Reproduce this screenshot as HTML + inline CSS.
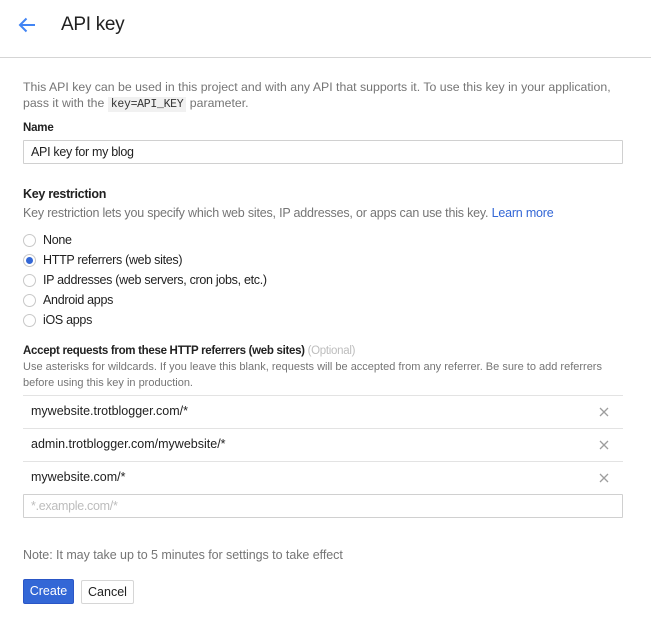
<!DOCTYPE html>
<html><head><meta charset="utf-8">
<style>
*{margin:0;padding:0;box-sizing:border-box}
body{width:651px;height:619px;background:#fff;font-family:"Liberation Sans",sans-serif;position:relative;overflow:hidden;color:#212121}
.a{position:absolute;white-space:nowrap}
.t12{font-size:12.3px;color:#757575}
.t11{font-size:11px;color:#757575}
.lbl{font-size:12px;letter-spacing:-0.2px;color:#212121}
.inp{position:absolute;left:23px;width:600px;height:24px;border:1px solid #d0d0d0;border-radius:1px}
.radio{position:absolute;left:23px;width:13px;height:13px;border:1px solid #c8c8c8;border-radius:50%}
.rl{position:absolute;left:43px;font-size:12.5px;letter-spacing:-0.3px;color:#212121;white-space:nowrap}
.hr{position:absolute;left:23px;width:600px;height:1px;background:#e3e3e3}
.row{position:absolute;left:31px;font-size:12.5px;color:#212121;white-space:nowrap}
.x{position:absolute;left:599px;width:10px;height:10px}
</style></head><body>
<svg class="a" style="left:17px;top:16px" width="19" height="18" viewBox="0 0 19 18"><path d="M18 9H3M9.5 2.5L3 9l6.5 6.5" fill="none" stroke="#4285f4" stroke-width="2"/></svg>
<div class="a" style="left:61px;top:14px;font-size:19px;letter-spacing:-0.3px;color:#212121">API key</div>
<div class="a" style="left:0;top:57px;width:651px;height:1px;background:#d5d5d5"></div>

<div class="a t12" style="left:23px;top:80px">This API key can be used in this project and with any API that supports it. To use this key in your application,</div>
<div class="a t12" style="left:23px;top:96px">pass it with the <span style="font-family:'Liberation Mono',monospace;font-size:11.5px;background:#f1f1f1;padding:1px 3px;color:#333;letter-spacing:-0.3px">key=API_KEY</span> parameter.</div>

<div class="a lbl" style="left:23px;top:122px;font-weight:bold;font-size:11.5px">Name</div>
<div class="inp" style="top:140px"></div>
<div class="a" style="left:31px;top:145px;font-size:12.5px;letter-spacing:-0.3px">API key for my blog</div>

<div class="a" style="left:23px;top:187px;font-size:12.5px;font-weight:bold;letter-spacing:-0.3px;color:#212121">Key restriction</div>
<div class="a" style="left:23px;top:206px;font-size:12.5px;letter-spacing:-0.2px;color:#757575">Key restriction lets you specify which web sites, IP addresses, or apps can use this key. <span style="color:#3367d6">Learn more</span></div>

<div class="radio" style="top:234px"></div><div class="rl" style="top:233px">None</div>
<div class="radio" style="top:254px"><div style="position:absolute;left:2px;top:2px;width:7px;height:7px;border-radius:50%;background:#3367d6"></div></div><div class="rl" style="top:253px">HTTP referrers (web sites)</div>
<div class="radio" style="top:274px"></div><div class="rl" style="top:273px">IP addresses (web servers, cron jobs, etc.)</div>
<div class="radio" style="top:294px"></div><div class="rl" style="top:293px">Android apps</div>
<div class="radio" style="top:314px"></div><div class="rl" style="top:313px">iOS apps</div>

<div class="a" style="left:23px;top:345px;font-size:11.5px;font-weight:bold;letter-spacing:-0.3px;color:#212121">Accept requests from these HTTP referrers (web sites) <span style="font-weight:normal;color:#bdbdbd">(Optional)</span></div>
<div class="a t11" style="left:23px;top:361px">Use asterisks for wildcards. If you leave this blank, requests will be accepted from any referrer. Be sure to add referrers</div>
<div class="a t11" style="left:23px;top:377px">before using this key in production.</div>

<div class="hr" style="top:395px"></div>
<div class="row" style="top:404px">mywebsite.trotblogger.com/*</div>
<svg class="x" style="top:407px" viewBox="0 0 10 10"><path d="M1 1l8 8M9 1L1 9" stroke="#9e9e9e" stroke-width="1.3"/></svg>
<div class="hr" style="top:428px"></div>
<div class="row" style="top:437px">admin.trotblogger.com/mywebsite/*</div>
<svg class="x" style="top:440px" viewBox="0 0 10 10"><path d="M1 1l8 8M9 1L1 9" stroke="#9e9e9e" stroke-width="1.3"/></svg>
<div class="hr" style="top:461px"></div>
<div class="row" style="top:470px">mywebsite.com/*</div>
<svg class="x" style="top:473px" viewBox="0 0 10 10"><path d="M1 1l8 8M9 1L1 9" stroke="#9e9e9e" stroke-width="1.3"/></svg>
<div class="inp" style="top:494px"></div>
<div class="a" style="left:31px;top:499px;font-size:12.5px;letter-spacing:-0.3px;color:#bdbdbd">*.example.com/*</div>

<div class="a" style="left:23px;top:548px;font-size:12.5px;letter-spacing:-0.05px;color:#757575">Note: It may take up to 5 minutes for settings to take effect</div>

<div class="a" style="left:23px;top:579px;width:51px;height:25px;background:#3367d6;border:1px solid #2a56c6;border-radius:2px;color:#fff;font-size:12.5px;text-align:center;line-height:23px">Create</div>
<div class="a" style="left:81px;top:580px;width:53px;height:24px;background:#fff;border:1px solid #d6d6d6;border-radius:2px;color:#212121;font-size:12.5px;text-align:center;line-height:22px">Cancel</div>
</body></html>
